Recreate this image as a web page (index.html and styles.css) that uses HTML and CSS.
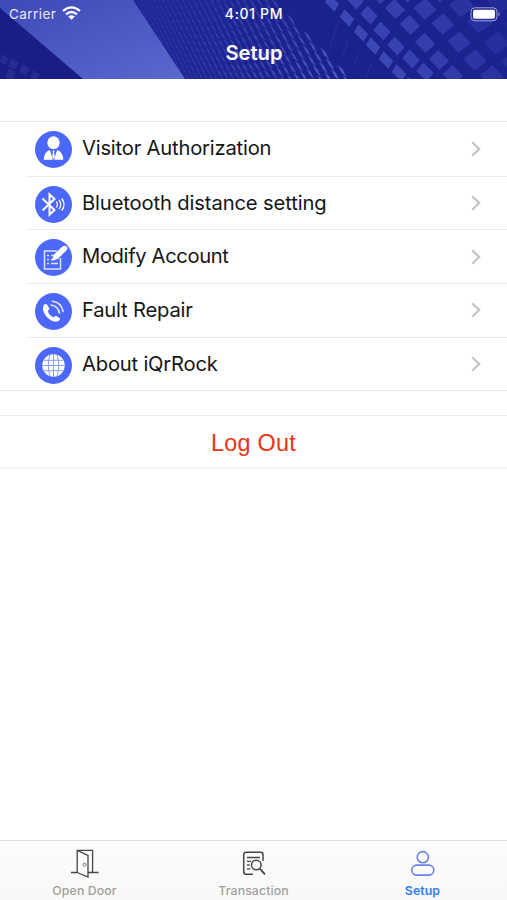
FILE: index.html
```html
<!DOCTYPE html>
<html lang="en">
<head>
<meta charset="utf-8">
<title>Setup</title>
<link rel="stylesheet" href="styles.css">
</head>
<body>
<div class="app">
  <header class="header">
    <svg class="backdrop" viewBox="0 0 507 79" aria-hidden="true">
      <defs>
        <linearGradient id="sky" x1="0" y1="0" x2="1" y2="1">
          <stop offset="0" stop-color="#3e49b8"/><stop offset="1" stop-color="#5d69d0"/>
        </linearGradient>
        <linearGradient id="wall" x1="0" y1="0" x2="1" y2="0">
          <stop offset="0" stop-color="#20289a"/><stop offset=".5" stop-color="#1b218d"/><stop offset="1" stop-color="#1c2290"/>
        </linearGradient>
        <clipPath id="wall-clip"><path d="M133 0H507V79H185Z"/></clipPath>
      </defs>
      <rect width="200" height="79" fill="url(#sky)"/>
      <path d="M0 8L83 79H0Z" fill="#191d85"/>
      <path d="M2 54l7 5-4 6-5-3zM12 58l7 5-4 7-7-4zM23 64l7 5-4 7-7-4zM33 70l7 5-3 4h-7zM9 68l7 5-3 6H5z" fill="#272c93"/>
      <path d="M133 0H507V79H185Z" fill="url(#wall)"/>
      <g id="left-tower" fill="#5964cb" clip-path="url(#wall-clip)"></g>
      <g id="right-tower" fill="#3c46b5"></g>
      <path d="M337 24l-8 28M348 41l-6 17M359 52l-5 15M371 63l-4 14" stroke="#2d359f" stroke-width=".7" fill="none"/>
    </svg>
    <div class="status">
      <div class="carrier"><span>Carrier</span>
        <svg width="19" height="14" viewBox="0 0 19 14"><g fill="none" stroke="#fff" stroke-width="2.3"><path d="M1 5Q9.500-2.300 18 5"/><path d="M4 8.300Q9.500 3.600 15 8.300"/></g><path d="M6.200 10.500Q9.500 7.900 12.800 10.500L9.500 13.800Z" fill="#fff"/></svg>
      </div>
      <span class="time">4:01 PM</span>
      <svg class="battery" width="31" height="15" viewBox="0 0 31 15"><rect x="1" y=".8" width="26" height="13" rx="4" fill="none" stroke="#a2a6d6"/><rect x="3" y="2.800" width="22" height="9" rx="2" fill="#fff"/><path d="M28.500 5q2.200 2.300 0 4.600z" fill="#a2a6d6"/></svg>
    </div>
    <h1 class="title">Setup</h1>
  </header>

  <main class="content">
    <ul class="menu">
      <li class="row">
        <svg class="icon" viewBox="0 0 37 37"><circle cx="18.500" cy="18.500" r="18.500" fill="#4b68f8"/><g fill="#fff"><ellipse cx="18.500" cy="11.700" rx="6.200" ry="6.400"/><path d="M8.700 28.700Q9 20.500 15 19L18 28.700ZM28.300 28.700Q28 20.500 22 19L19 28.700Z"/></g><path d="M15.200 18.800L18 28.700h1L21.800 18.800z" fill="#4b68f8"/><path d="M17.500 19.500h2l-.4 1.800 .7 4.500-1.300 2.400-1.300-2.400.7-4.500z" fill="#fff"/></svg>
        <span class="label">Visitor Authorization</span>
        <svg class="chevron" viewBox="0 0 10 16"><path d="M1.200 1.200L8.200 8L1.200 14.800"/></svg>
      </li>
      <li class="row">
        <svg class="icon" viewBox="0 0 37 37"><circle cx="18.500" cy="18.500" r="18.500" fill="#4b68f8"/><g fill="none" stroke="#fff"><path stroke-width="2" d="M7.500 12.500L19.500 24L14.500 28.700V8.300L19.500 13L7.500 24.500"/><path stroke-width="1.300" d="M21.300 15.500q2.300 3 0 6M24 14q3.500 4.500 0 9M26.800 12.500q4.500 6 0 12"/></g></svg>
        <span class="label wide">Bluetooth distance setting</span>
        <svg class="chevron" viewBox="0 0 10 16"><path d="M1.200 1.200L8.200 8L1.200 14.800"/></svg>
      </li>
      <li class="row">
        <svg class="icon" viewBox="0 0 37 37"><circle cx="18.500" cy="18.500" r="18.500" fill="#4b68f8"/><g fill="none" stroke="#dce2ff" stroke-width="1.500"><path d="M22 12H9.500V30H25.500V19"/><path d="M12 16.500h2M16 16.500h4M12 20.500h2M16 20.500h3M12 24.500h2M16 24.500h7"/></g><path d="M17 21.800L19 15.500 27 7.800Q29.800 5.600 31.700 7.600Q33.300 9.600 30.800 12.100L22.800 20Z" fill="#fff"/></svg>
        <span class="label tight">Modify Account</span>
        <svg class="chevron" viewBox="0 0 10 16"><path d="M1.200 1.200L8.200 8L1.200 14.800"/></svg>
      </li>
      <li class="row">
        <svg class="icon" viewBox="0 0 37 37"><circle cx="18.500" cy="18.500" r="18.500" fill="#4b68f8"/><path d="M8.500 12.500Q10 10.300 12 11.500L14.400 15.500Q14.500 16.800 12.700 18Q14 22.500 18.600 24.300Q20.300 22.500 21.500 23L25 25.500Q25.200 27.700 22 28.600Q16 29.300 11 23Q6.500 17 8.500 12.500Z" fill="#fff"/><g fill="none" stroke="#e5e9ff" stroke-width="1.600" stroke-linecap="round"><path d="M17.500 8.300Q26.500 9.500 28 18.500"/><path d="M16 12Q23 13 24.500 20"/></g></svg>
        <span class="label">Fault Repair</span>
        <svg class="chevron" viewBox="0 0 10 16"><path d="M1.200 1.200L8.200 8L1.200 14.800"/></svg>
      </li>
      <li class="row">
        <svg class="icon" viewBox="0 0 37 37"><circle cx="18.500" cy="18.500" r="18.500" fill="#4b68f8"/><circle cx="18.500" cy="18.500" r="11.200" fill="#fff"/><g fill="none" stroke="#8b9dfb" stroke-width="1"><path d="M18.500 7V30M7.500 18.500H29.500M9 13.300H28M9 23.700H28"/><path d="M15 8Q11.500 18.500 15 29M22 8Q25.500 18.500 22 29"/></g></svg>
        <span class="label">About iQrRock</span>
        <svg class="chevron" viewBox="0 0 10 16"><path d="M1.200 1.200L8.200 8L1.200 14.800"/></svg>
      </li>
    </ul>
    <button class="logout" type="button">Log Out</button>
  </main>

  <nav class="tabs">
    <a class="tab">
      <svg width="28" height="29" viewBox="0 0 28 29" fill="none" stroke="#454545" stroke-width="1.300"><path d="M0 23.500H6.200V1.300H21.600V23.500H27.500M6.200 1.300L17 6.300V28L6.200 23.500M17 23.500H21.600"/><circle cx="13.500" cy="15.700" r="1.500" stroke-width="1" stroke="#777"/></svg>
      <span>Open Door</span>
    </a>
    <a class="tab">
      <svg width="28" height="29" viewBox="0 0 28 29" fill="none" stroke="#454545" stroke-width="1.500"><path d="M13 25.200H6.200Q3.700 25.200 3.700 22.700V5.800Q3.700 3.300 6.200 3.300H20.500Q23 3.300 23 5.800V12"/><path d="M7 8.500H20M7 12.300H11M7 16H9.500M7 19.800H10.500" stroke-width="1.300"/><circle cx="16.300" cy="16" r="4.800"/><path d="M19.800 19.700L25 25.300" stroke-width="1.800"/></svg>
      <span>Transaction</span>
    </a>
    <a class="tab active">
      <svg width="28" height="29" viewBox="0 0 28 29" fill="none" stroke="#6c80ee" stroke-width="1.600"><circle cx="13.800" cy="8.200" r="5.600"/><rect x="2.800" y="16.100" width="22" height="10" rx="4.800"/></svg>
      <span>Setup</span>
    </a>
  </nav>
</div>
<script src="towers.js"></script>
</body>
</html>
```
FILE: styles.css
```css
* { box-sizing: border-box; }
body { margin: 0; font-family: Inter, "Liberation Sans", sans-serif; color: #161616; }
.app { width: 507px; height: 900px; display: flex; flex-direction: column; background: #fff; overflow: hidden; }
.header { position: relative; height: 79px; flex: none; color: #fff; background: #1b218d; }
.backdrop { position: absolute; inset: 0; width: 507px; height: 79px; }
.status { position: relative; display: grid; grid-template-columns: 1fr auto 1fr; align-items: center; height: 27px; padding: 0 6px 0 9px; font-size: 13.5px; line-height: 28px; }
.carrier { display: flex; align-items: center; gap: 6px; color: #e6e8fa; letter-spacing: .45px; }
.carrier svg { margin-top: -2px; }
.time { font-weight: 500; font-size: 14px; letter-spacing: .65px; margin-right: 2px; }
.battery { justify-self: end; }
.title { position: relative; margin: 11px 0 0; text-align: center; font-size: 20.2px; line-height: 30px; font-weight: 600; text-indent: 1px; }
.content { flex: 1; padding-top: 42px; }
.menu { list-style: none; margin: 0; padding: 0; border-top: 1px solid #ececec; border-bottom: 1px solid #e8e8e8; }
.row { display: flex; align-items: center; height: 53.7px; margin-left: 26px; padding: 2px 26px 0 9px; }
.row + .row { border-top: 1px solid #ececec; }
.row:last-child { height: 53px; padding-top: 3px; }
.icon { width: 37px; height: 37px; flex: none; }
.label { flex: 1; margin: -3px 0 0 10px; font-size: 20.2px; line-height: 28px; letter-spacing: -.2px; white-space: nowrap; }
.tight { letter-spacing: -.36px; }
.wide { letter-spacing: -.13px; }
.chevron { width: 10px; height: 16px; margin-top: -2px; fill: none; stroke: #c4c4c7; stroke-width: 2.2; }
.logout { display: block; width: 100%; height: 54px; margin-top: 24px; padding: 2px 0 0; border: 0; border-top: 1px solid #ececec; border-bottom: 2px solid #f6f6f6; background: #fff; color: #ed3212; font: 23.4px/50px "Liberation Sans", Arial, sans-serif; letter-spacing: .25px; }
.tabs { flex: none; display: grid; grid-template-columns: repeat(3, 1fr); height: 60px; border-top: 1px solid #dedede; background: linear-gradient(#fcfcfc, #f8f8f8); }
.tab { display: flex; flex-direction: column; align-items: center; padding-top: 8px; color: #a0a0a0; font-size: 12.3px; line-height: 16px; font-weight: 500; letter-spacing: .1px; }
.tab span { margin-top: 5px; }
.active { color: #2d7ff0; font-weight: 600; }
```
FILE: towers.js
```js
const NS = "http://www.w3.org/2000/svg";

function tile(group, points, opacity) {
  const p = document.createElementNS(NS, "polygon");
  p.setAttribute("points", points.map(q => q.map(n => n.toFixed(1)).join(",")).join(" "));
  p.setAttribute("opacity", opacity.toFixed(2));
  group.appendChild(p);
}

// Right tower: window centres, listed along each diagonal.
const diagonals = [
  [[332, 3], [340, -12]],
  [[347, 18], [355, 0], [364, -16]],
  [[361, 33], [369, 15], [380, -6]],
  [[373, 46], [382, 31], [395, 9], [408, -8]],
  [[386, 60], [396, 46], [410, 25], [425, 9], [441, -9]],
  [[399, 73], [411, 59], [425, 43], [443, 24], [462, 6]],
  [[411, 86], [425, 72], [439, 60], [459, 42], [480, 22], [501, 2]],
  [[439, 88], [453, 75], [475, 60], [497, 43], [519, 24]],
  [[472, 90], [492, 76], [514, 62]]
];
const right = document.getElementById("right-tower");
diagonals.forEach((row, r) => row.forEach(([x, y], i) => {
  const k = i + Math.max(0, r - 6);
  const w = 7.2 + 1.5 * k;
  const h = 8.7 + .7 * k;
  const lean = -2.5 + k;
  tile(right, [[x - w, y - 1], [x + lean, y - h], [x + w, y + 1], [x - lean, y + h]],
    Math.max(.22, 1 - k * .11 - Math.max(0, (x - 430) / 350)));
}));

// Left tower: steep slats hung below a 45-degree roof line, narrowing to the left.
const left = document.getElementById("left-tower");
const slope = 0.5;
let x0 = 314;
while (x0 > 96) {
  const near = Math.max(0, Math.min(1, (x0 - 96) / 216));
  const w = 2.8 + 6 * near;
  const h = 5 + 6 * near;
  const roof = (x0 - 272) * 2 - 2;
  const first = roof + Math.max(0, Math.ceil((-12 - roof) / h)) * h;
  for (let y = first; y < 82; y += h) {
    const at = (dx, dy) => [x0 + slope * (y + dy) + dx, y + dy + dx * .9];
    tile(left, [at(0, 0), at(w * .62, 0), at(w * .62, h * .76), at(0, h * .76)],
      Math.max(.1, (.12 + .8 * near) * (.55 + Math.max(0, y) / 170)));
  }
  x0 -= w;
}
```
